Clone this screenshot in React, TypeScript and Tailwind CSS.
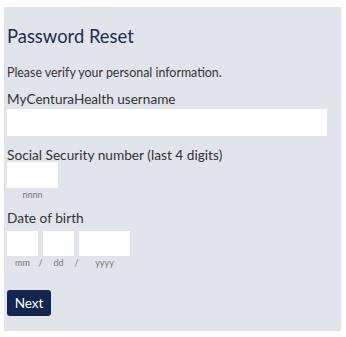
import React from "react";

export default function App() {
  const font = { fontFamily: '"Lato", "Open Sans", sans-serif' };
  return (
    <div className="w-[346px] h-[337px] bg-white" style={font}>
      <div className="ml-[4px] pt-[7px]">
        <div className="w-[337px] h-[324px] bg-[#e1e4ea] pl-[3px] pt-[17px] flex flex-col">
          <h1 className="text-[18.4px] leading-[24px] text-[#1d2c4f] font-normal">Password Reset</h1>
          <p className="mt-[17px] text-[12.4px] leading-[16px] text-[#333]">
            Please verify your personal information.
          </p>
          <label className="mt-[9px] text-[13.6px] leading-[18px] text-[#333]">MyCenturaHealth username</label>
          <input className="mt-[1px] w-[320px] h-[27px] bg-white outline-none" />
          <label className="mt-[10px] text-[13.7px] leading-[18px] text-[#333]">
            Social Security number (last 4 digits)
          </label>
          <input className="mt-[-2px] w-[51px] h-[26px] bg-white outline-none" />
          <div className="w-[51px] text-center text-[9px] leading-[12px] text-[#777] mt-[1px]">nnnn</div>
          <label className="mt-[8px] text-[13.7px] leading-[18px] text-[#333]">Date of birth</label>
          <div className="mt-[4px] flex items-center gap-[5px]">
            <input className="w-[31px] h-[25px] bg-white outline-none" />
            <input className="w-[31px] h-[25px] bg-white outline-none" />
            <input className="w-[51px] h-[25px] bg-white outline-none" />
          </div>
          <div className="flex text-[9px] leading-[12px] text-[#777] mt-[1px]">
            <span className="w-[31px] text-center">mm</span>
            <span className="w-[5px] text-center">/</span>
            <span className="w-[31px] text-center">dd</span>
            <span className="w-[5px] text-center">/</span>
            <span className="w-[51px] text-center">yyyy</span>
          </div>
          <div className="mt-[21px]">
            <button className="w-[44px] h-[26px] rounded-[3px] bg-[#13264f] text-white text-[13.5px] leading-[26px]">
              Next
            </button>
          </div>
        </div>
      </div>
    </div>
  );
}
